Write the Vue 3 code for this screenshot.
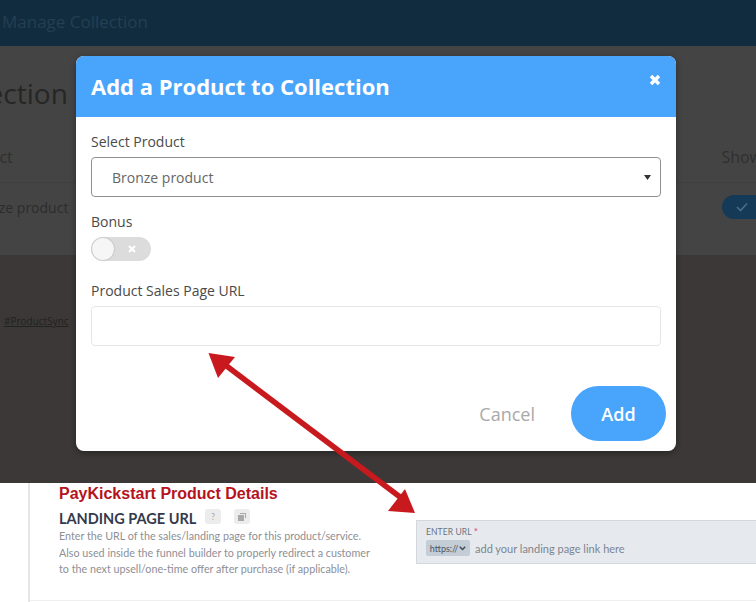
<script setup>
const helpLines = [
  'Enter the URL of the sales/landing page for this product/service.',
  'Also used inside the funnel builder to properly redirect a customer',
  'to the next upsell/one-time offer after purchase (if applicable).',
]
</script>

<template>
  <div class="shot">
    <section class="backdrop">
      <header class="topbar"><span class="topbar-title">Manage Collection</span></header>
      <div class="under">
        <h2 class="under-title">Collection</h2>
        <div class="under-head">
          <span>Product</span>
          <span class="show">Show</span>
        </div>
        <div class="under-row">
          <span class="row-name">Bronze product</span>
          <span class="pill"><svg width="12" height="10" viewBox="0 0 12 10"><path d="M1 5l3.500 3.500L11 1.500" fill="none" stroke="#4a6c86" stroke-width="1.600"/></svg></span>
        </div>
      </div>
      <a class="under-link">#ProductSync</a>

      <div class="modal">
        <div class="modal-head">
          <h1>Add a Product to Collection</h1>
          <svg class="close" width="12" height="12" viewBox="0 0 12 12"><path d="M2 2l8 8M10 2l-8 8" stroke="#fff" stroke-width="3.400"/></svg>
        </div>
        <div class="modal-body">
          <label class="lab lab-select">Select Product</label>
          <div class="select">
            <span>Bronze product</span>
            <svg width="7" height="5" viewBox="0 0 7 5"><path d="M0 0h7L3.500 5z" fill="#333"/></svg>
          </div>
          <label class="lab lab-bonus">Bonus</label>
          <div class="toggle">
            <span class="knob"></span>
            <svg width="8" height="8" viewBox="0 0 8 8"><path d="M1 1l6 6M7 1L1 7" stroke="#fff" stroke-width="2.200"/></svg>
          </div>
          <label class="lab lab-url">Product Sales Page URL</label>
          <div class="input"></div>
          <div class="actions">
            <span class="cancel">Cancel</span>
            <span class="add">Add</span>
          </div>
        </div>
      </div>
    </section>

    <section class="details">
      <div class="details-left">
        <div class="pk-title">PayKickstart Product Details</div>
        <div class="lp-row">
          <span class="lp-title">LANDING PAGE URL</span>
          <span class="chip">?</span>
          <span class="chip"><svg width="8" height="8" viewBox="0 0 8 8"><path d="M2 0h6v5H7V1H2zM0 2h6v6H0z" fill="#a9a9a9"/></svg></span>
        </div>
        <p v-for="line in helpLines" :key="line" class="help">{{ line }}</p>
      </div>
      <div class="url-box">
        <div class="url-label">ENTER URL <b>*</b></div>
        <div class="url-row">
          <span class="proto">https://<svg width="7" height="5" viewBox="0 0 7 5"><path d="M.8.8l2.700 2.700L6.200.8" fill="none" stroke="#3d4a5a" stroke-width="1.500"/></svg></span>
          <span class="url-ph">add your landing page link here</span>
        </div>
      </div>
    </section>

    <svg class="arrow" width="756" height="602" viewBox="0 0 756 602">
      <path d="M220 361L404 500" stroke="#c8191e" stroke-width="5.500"/>
      <path d="M208.500 353L235 357L218 378z" fill="#c8191e"/>
      <path d="M415 513L388 511L405 489z" fill="#c8191e"/>
    </svg>
  </div>
</template>

<style>
html, body { margin: 0; background: #fff; }
</style>

<style scoped>
.shot {
  position: relative;
  width: 756px;
  height: 602px;
  overflow: hidden;
  font-family: "Open Sans", sans-serif;
  background: #fff;
}
.backdrop {
  position: relative;
  height: 483px;
  background: #3b3837;
  overflow: hidden;
}
.topbar {
  height: 46px;
  background: #122c3f;
  display: flex;
  align-items: center;
  padding-left: 2px;
  box-sizing: border-box;
}
.topbar-title {
  font-size: 17px;
  line-height: 22px;
  margin-top: -3px;
  color: #233f52;
}
.under {
  height: 209px;
  width: 842px;
  margin-left: -46px;
  padding-top: 28px;
  box-sizing: border-box;
  background: #454444;
  color: #2c2c2c;
  display: flex;
  flex-direction: column;
}
.under-title {
  margin: 0 0 0 -15px;
  font-size: 28px;
  font-weight: 400;
  line-height: 38px;
  color: #262626;
}
.under-head {
  margin-top: 34px;
  height: 36px;
  display: flex;
  justify-content: space-between;
  font-size: 16px;
  line-height: 22px;
  color: #2f2f2f;
}
.show { margin-right: 34px; }
.under-row {
  border-top: 1px solid #3f3f3f;
  padding: 12px 2px 0 13px;
  display: flex;
  justify-content: space-between;
  align-items: flex-start;
  font-size: 14px;
  color: #2c2c2c;
}
.row-name { margin-top: 3px; }
.pill {
  width: 72px;
  height: 24px;
  border-radius: 12px;
  background: #153a57;
  display: flex;
  align-items: center;
  padding-left: 14px;
  box-sizing: border-box;
}
.under-link {
  display: block;
  margin: 59px 0 0 4px;
  font-size: 10px;
  color: #222;
  text-decoration: underline;
}
.modal {
  position: absolute;
  left: 76px;
  top: 56px;
  width: 600px;
  height: 395px;
  background: #fff;
  border-radius: 8px;
  overflow: hidden;
  box-shadow: 0 2px 6px rgba(0,0,0,.35);
}
.modal-head {
  height: 61px;
  background: #48a5fb;
  display: flex;
  justify-content: space-between;
  padding: 0 15px;
  box-sizing: border-box;
}
.modal-head h1 {
  margin: 0;
  font-size: 22px;
  line-height: 61px;
  font-weight: 700;
  color: #fff;
}
.close { margin: 18px 0 0; }
.modal-body {
  padding: 0 15px;
  display: flex;
  flex-direction: column;
}
.lab {
  font-size: 14px;
  line-height: 20px;
  color: #4a4a4a;
}
.lab-select { margin-top: 15px; }
.select {
  margin-top: 5px;
  height: 40px;
  box-sizing: border-box;
  border: 1px solid #8f8f8f;
  border-radius: 4px;
  display: flex;
  align-items: center;
  justify-content: space-between;
  padding: 0 9px 0 20px;
  font-size: 14px;
  color: #666;
}
.lab-bonus { margin-top: 15px; }
.toggle {
  margin-top: 5px;
  width: 60px;
  height: 24px;
  border-radius: 12px;
  background: #dcdcdc;
  position: relative;
  display: flex;
  align-items: center;
  justify-content: flex-end;
  padding-right: 15px;
  box-sizing: border-box;
}
.knob {
  position: absolute;
  left: 1px;
  top: 1px;
  width: 22px;
  height: 22px;
  border-radius: 50%;
  background: #f6f6f6;
  box-shadow: 0 0 2px rgba(0,0,0,.25);
}
.lab-url { margin-top: 20px; }
.input {
  margin-top: 5px;
  height: 40px;
  box-sizing: border-box;
  border: 1px solid #e6e6e6;
  border-radius: 4px;
}
.actions {
  display: flex;
  justify-content: flex-end;
  align-items: center;
  margin-top: 40px;
  margin-right: -5px;
}
.cancel {
  font-size: 18px;
  color: #a9a9a9;
  margin-right: 36px;
}
.add {
  width: 95px;
  height: 55px;
  border-radius: 28px;
  background: #48a5fb;
  color: #fff;
  font-size: 18px;
  font-weight: 600;
  display: flex;
  align-items: center;
  justify-content: center;
}
.details {
  height: 119px;
  position: relative;
  display: flex;
}
.details::before {
  content: "";
  position: absolute;
  left: 28px;
  top: 0;
  bottom: 0;
  width: 2px;
  background: #e6e6e6;
}
.details::after {
  content: "";
  position: absolute;
  left: 30px;
  right: 0;
  top: 117px;
  height: 1px;
  background: #eee;
}
.details-left {
  width: 416px;
  box-sizing: border-box;
  padding: 1px 0 0 59px;
  font-family: "Lato", sans-serif;
}
.pk-title {
  font-family: "Liberation Sans", sans-serif;
  font-weight: 700;
  font-size: 16px;
  line-height: 19px;
  color: #b5131d;
}
.lp-row {
  display: flex;
  align-items: center;
  height: 20px;
  margin-top: 5px;
}
.lp-title {
  font-size: 14.500px;
  font-weight: 700;
  color: #343a4d;
  width: 146px;
}
.chip {
  width: 16px;
  height: 15px;
  margin-top: -3px;
  border-radius: 3px;
  background: #ececec;
  color: #aaa;
  font-size: 9px;
  display: flex;
  align-items: center;
  justify-content: center;
  margin-right: 13px;
}
.help {
  margin: 0;
  font-size: 10.750px;
  line-height: 16.700px;
  color: #8d8f96;
  white-space: nowrap;
}
.url-box {
  position: absolute;
  left: 416px;
  top: 37px;
  width: 340px;
  height: 44px;
  box-sizing: border-box;
  background: #e6eaee;
  border: 1px solid #d3d8dd;
  border-right: 0;
  padding: 6px 9px 0;
  font-family: "Lato", sans-serif;
}
.url-label {
  font-size: 8.500px;
  line-height: 11px;
  color: #6b7280;
  letter-spacing: .1px;
}
.url-label b { color: #d8627f; font-weight: 700; font-size: 10px; line-height: 8px; }
.url-row {
  display: flex;
  align-items: center;
  margin-top: 2px;
}
.proto {
  width: 44px;
  height: 16px;
  box-sizing: border-box;
  border-radius: 2px;
  background: #c4ccd5;
  color: #4a5767;
  font-size: 9px;
  display: flex;
  align-items: center;
  justify-content: center;
  gap: 1px;
  margin-right: 5px;
}
.url-ph {
  font-size: 11px;
  color: #7d8590;
}
.arrow {
  position: absolute;
  left: 0;
  top: 0;
  pointer-events: none;
}
</style>
